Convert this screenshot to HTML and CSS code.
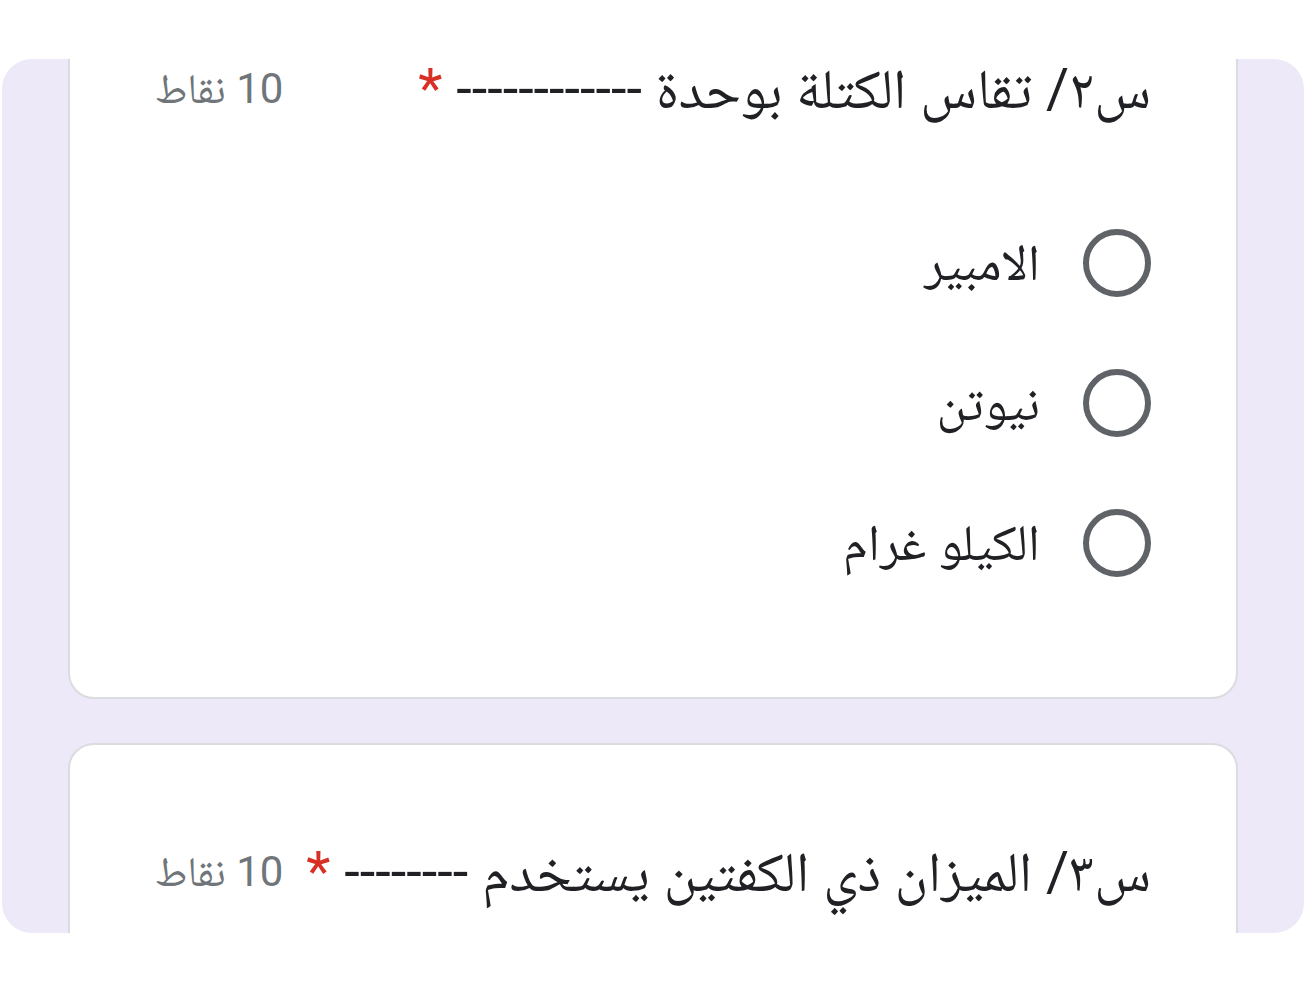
FILE: index.html
```html
<!DOCTYPE html>
<html lang="ar" dir="rtl">
<head>
<meta charset="utf-8">
<link rel="stylesheet" href="styles.css">
</head>
<body>
<div class="panel">
  <div class="card card-first">
    <div class="head">
      <div class="title">س٢/ تقاس الكتلة بوحدة ------------ <span class="req">*</span></div>
      <div class="points">10 نقاط</div>
    </div>
    <div class="options">
      <div class="option"><span class="radio"></span><span class="label">الامبير</span></div>
      <div class="option"><span class="radio"></span><span class="label">نيوتن</span></div>
      <div class="option"><span class="radio"></span><span class="label">الكيلو غرام</span></div>
    </div>
  </div>
  <div class="card card-second">
    <div class="head">
      <div class="title">س٣/ الميزان ذي الكفتين يستخدم -------- <span class="req">*</span></div>
      <div class="points">10 نقاط</div>
    </div>
  </div>
</div>
</body>
</html>
```
FILE: styles.css
```css
html, body {
  margin: 0;
  padding: 0;
  background: #ffffff;
}
body {
  font-family: Roboto, "Noto Naskh Arabic", sans-serif;
  color: #202124;
}
.panel {
  margin: 59px 3px 0 2px;
  height: 874px;
  background: #ede9f8;
  border-radius: 30px;
  overflow: hidden;
  box-sizing: border-box;
  padding: 0 66px;
}
.card {
  background: #ffffff;
  border: 2px solid #dadce0;
  border-radius: 26px;
  padding: 0 85px;
}
.card-first {
  margin-top: -30px;
  padding-top: 30px;
  padding-bottom: 120px;
}
.card-second {
  margin-top: 44px;
  padding-top: 99px;
  padding-bottom: 80px;
}
.head {
  display: flex;
  justify-content: space-between;
  align-items: center;
  height: 56px;
}
.title {
  font-size: 56px;
  line-height: 56px;
  white-space: nowrap;
}
.req {
  color: #d93025;
}
.points {
  font-size: 42px;
  line-height: 56px;
  color: #70757a;
}
.options {
  margin-top: 112px;
  display: flex;
  flex-direction: column;
  gap: 72px;
}
.option {
  display: flex;
  align-items: center;
  height: 68px;
  gap: 43px;
}
.radio {
  width: 68px;
  height: 68px;
  box-sizing: border-box;
  border: 6px solid #5f6368;
  border-radius: 50%;
  flex: none;
}
.label {
  font-size: 51px;
  line-height: 56px;
}
```
